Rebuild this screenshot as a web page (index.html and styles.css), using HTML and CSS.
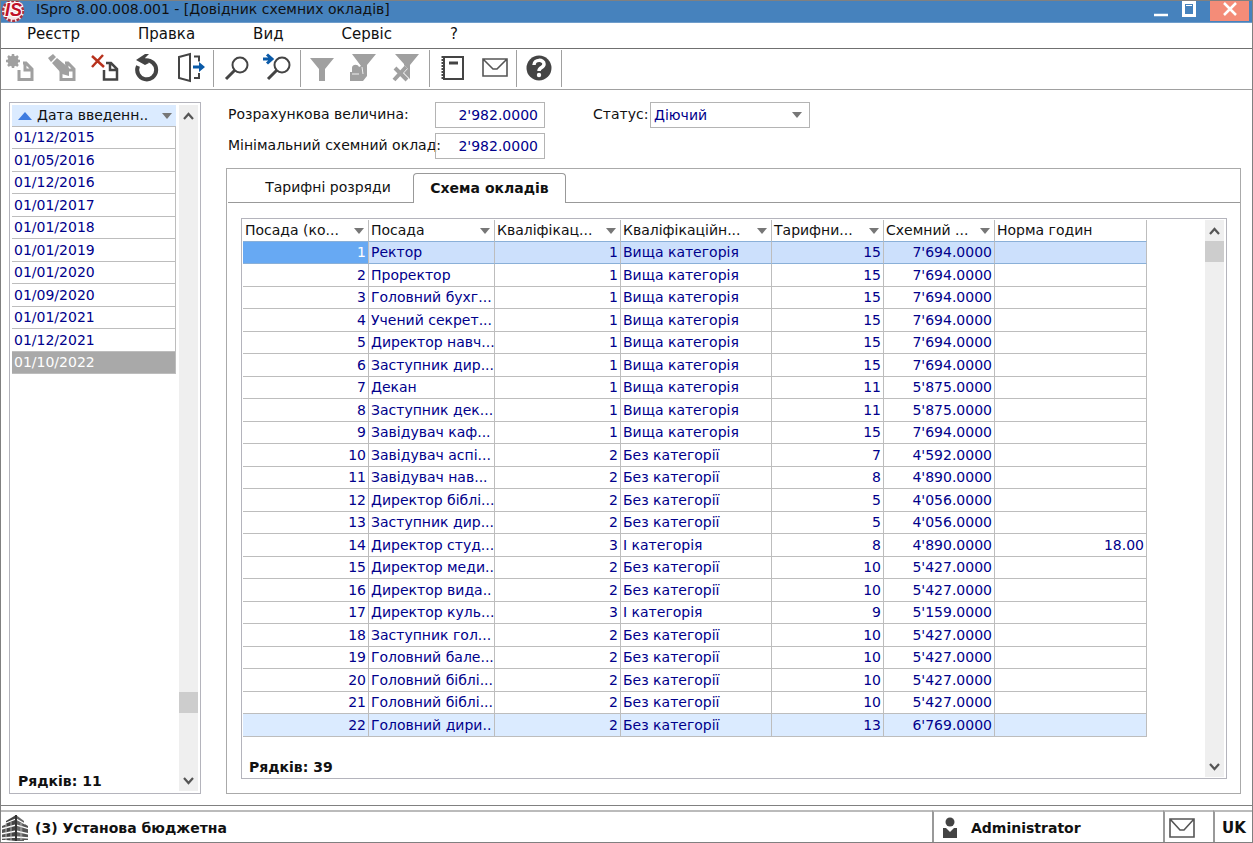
FILE: index.html
```html
<!DOCTYPE html>
<html lang="uk">
<head>
<meta charset="utf-8">
<title>ISpro 8.00.008.001 - [Довідник схемних окладів]</title>
<link rel="stylesheet" href="styles.css">
</head>
<body>
<div class="window">
  <header class="titlebar">
    <svg class="logo" width="30" height="22" viewBox="0 0 30 22" aria-hidden="true">
      <circle cx="12" cy="10" r="11" fill="#f4e4e6"/>
      <circle cx="12" cy="10" r="10" fill="none" stroke="#a8323f" stroke-width="2.500" stroke-dasharray="3 1.500"/>
      <text class="logo-text" x="4" y="15">IS</text>
    </svg>
    <h1 class="title">ISpro 8.00.008.001 - [Довідник схемних окладів]</h1>
    <div class="window-buttons">
      <button class="winbtn" aria-label="Згорнути"><svg width="14" height="16" viewBox="0 0 14 16"><path d="M0 14h14" stroke="#fff" stroke-width="2.500"/></svg></button>
      <button class="winbtn" aria-label="Розгорнути"><svg width="14" height="16" viewBox="0 0 14 16"><path d="M1.500 1.500h11v13h-11z" fill="none" stroke="#fff" stroke-width="3"/><path d="M4 4.500h6" stroke="#fff"/></svg></button>
      <button class="winbtn close" aria-label="Закрити"><svg width="14" height="14" viewBox="0 0 14 14"><path d="M1 1l12 12M13 1L1 13" stroke="#fff" stroke-width="2.500"/></svg></button>
    </div>
  </header>

  <nav class="menubar">
    <button>Реєстр</button><button>Правка</button><button>Вид</button><button>Сервіс</button><button>?</button>
  </nav>

  <div class="toolbar">
    <div class="tools">
      <button aria-label="Створити"><svg viewBox="0 0 32 32"><circle cx="6" cy="8" r="5.500" fill="#a0a0a0"/><path d="M6 1v14M-1 8h14M1 3l10 10M11 3L1 13" stroke="#a0a0a0" stroke-width="2.500"/><path d="M12 17v9.500h13V16l-6-6h-3M18 10v7h7" fill="none" stroke="#a0a0a0" stroke-width="3"/></svg></button>
      <button aria-label="Змінити"><svg viewBox="0 0 32 32"><path d="M12 18v8.500h13V16l-6-6h-3M18 10v7h7" fill="none" stroke="#a0a0a0" stroke-width="3"/><path d="M-1 5l5-4 3 3-5 5zM3 10l5-5 12 10v8l-7-2z" fill="#a0a0a0"/></svg></button>
      <button aria-label="Видалити"><svg viewBox="0 0 32 32"><path d="M1 3l12 11M12 2L1 14" stroke="#b8321d" stroke-width="2.500"/><path d="M13 17v9.500h13V16l-6-6h-5M19 10v7h7" fill="none" stroke="#444" stroke-width="2.500"/></svg></button>
      <button aria-label="Оновити"><svg viewBox="0 0 32 32"><path d="M5 13A9.500 9.500 0 1 0 12 7.500h4" fill="none" stroke="#444" stroke-width="4"/><path d="M3 7l9-6h4l-4 4 4 5-4 2z" fill="#444"/></svg></button>
      <button aria-label="Вийти"><svg viewBox="0 0 32 32"><path d="M4 4l11-3v27L4 25z" fill="none" stroke="#444" stroke-width="2"/><path d="M19 3.500h5v5M19 25h5v-5" fill="none" stroke="#444" stroke-width="2"/><path d="M18 12.500h6V9l6 5-6 5v-3.500h-6z" fill="#0a5aa8"/></svg></button>
    </div>
    <div class="tools">
      <button aria-label="Знайти"><svg viewBox="0 0 32 32"><circle cx="20" cy="12" r="7.500" fill="none" stroke="#444" stroke-width="2"/><path d="M15 17l-9 9" stroke="#444" stroke-width="3"/></svg></button>
      <button aria-label="Знайти далі"><svg viewBox="0 0 32 32"><circle cx="20" cy="12" r="7.500" fill="none" stroke="#444" stroke-width="2"/><path d="M15 17l-9 9" stroke="#444" stroke-width="3"/><path d="M1 6h8M5 1.500l5 4.500-5 4.500" fill="none" stroke="#0a5aa8" stroke-width="3"/></svg></button>
    </div>
    <div class="tools">
      <button aria-label="Фільтр"><svg viewBox="0 0 32 32"><path d="M3 5h24l-9 11v12h-6V16z" fill="#a0a0a0"/></svg></button>
      <button aria-label="Закріпити фільтр"><svg viewBox="0 0 32 32"><path d="M3 1h24l-9 11v11l-4 5H1v-9h2v-4c0-4 6-4 7-1l2-1z" fill="#a0a0a0"/><path d="M13 14l1 7M3 21h7" stroke="#eee" stroke-width="1"/></svg></button>
      <button aria-label="Зняти фільтр"><svg viewBox="0 0 32 32"><path d="M4 1h24l-9 11v14l-6-6v-9z" fill="#a0a0a0"/><path d="M4 15l12 12M15 14L3 27" stroke="#fff" stroke-width="5"/><path d="M4 15l12 12M15 14L3 27" stroke="#a0a0a0" stroke-width="4"/></svg></button>
    </div>
    <div class="tools">
      <button aria-label="Журнал"><svg viewBox="0 0 32 32"><path d="M8 4h19v22H8z" fill="none" stroke="#444" stroke-width="2"/><path d="M7 3v24" stroke="#444" stroke-width="3" stroke-dasharray="2 1"/><path d="M13 10h9" stroke="#444" stroke-width="3"/></svg></button>
      <button aria-label="Пошта"><svg viewBox="0 0 32 32"><path d="M5 6h24v17H5z M5 6l10 10h4L29 6" fill="none" stroke="#555" stroke-width="1.600"/></svg></button>
    </div>
    <div class="tools">
      <button aria-label="Довідка"><svg viewBox="0 0 32 32"><circle cx="16" cy="15" r="12.500" fill="#444"/><path d="M11 12c0-6 10-6 10-1 0 4-5 3-5 7" fill="none" stroke="#fff" stroke-width="3.500"/><circle cx="16" cy="22" r="2.200" fill="#fff"/></svg></button>
    </div>
  </div>

  <main class="workspace">
    <aside class="panel dates">
      <div class="panel-body">
        <table class="list">
          <thead><tr><th><span class="head"><svg width="14" height="9" viewBox="0 0 14 9"><path d="M0 9l7-8 7 8z" fill="#3d7be0"/></svg><span>Дата введенн..</span><i class="caret"></i></span></th></tr></thead>
          <tbody>
            <tr><td>01/12/2015</td></tr><tr><td>01/05/2016</td></tr><tr><td>01/12/2016</td></tr><tr><td>01/01/2017</td></tr><tr><td>01/01/2018</td></tr><tr><td>01/01/2019</td></tr><tr><td>01/01/2020</td></tr><tr><td>01/09/2020</td></tr><tr><td>01/01/2021</td></tr><tr><td>01/12/2021</td></tr><tr class="current"><td>01/10/2022</td></tr>
          </tbody>
        </table>
        <p class="count">Рядків: 11</p>
      </div>
      <div class="scrollbar at-end">
        <button aria-label="Вгору"><svg width="11" height="8" viewBox="0 0 11 8"><path d="M1 7l4.500-5L10 7" fill="none" stroke="#555" stroke-width="2.200"/></svg></button>
        <span class="thumb"></span>
        <button class="down" aria-label="Вниз"><svg width="11" height="8" viewBox="0 0 11 8"><path d="M1 1l4.500 5L10 1" fill="none" stroke="#555" stroke-width="2.200"/></svg></button>
      </div>
    </aside>

    <section class="details">
      <form class="fields">
        <label class="name" for="calc">Розрахункова величина:</label>
        <input id="calc" type="text" value="2'982.0000">
        <label class="status-label" for="status">Статус:</label>
        <span class="combo"><select id="status"><option>Діючий</option></select><i class="caret"></i></span>
        <label class="name" for="min">Мінімальний схемний оклад:</label>
        <input id="min" type="text" value="2'982.0000">
      </form>

      <div class="tabbox">
        <div class="tabs" role="tablist">
          <button role="tab" class="tab">Тарифні розряди</button>
          <button role="tab" class="tab active" aria-selected="true">Схема окладів</button>
        </div>
        <div class="panel scheme">
          <div class="panel-body">
            <table class="grid">
              <colgroup><col class="c-code"><col class="c-code"><col class="c-code"><col class="c-cat"><col class="c-rank"><col class="c-pay"><col class="c-norm"></colgroup>
              <thead><tr>
                <th><span class="head">Посада (ко...<i class="caret"></i></span></th>
                <th><span class="head">Посада<i class="caret"></i></span></th>
                <th><span class="head">Кваліфікац...<i class="caret"></i></span></th>
                <th><span class="head">Кваліфікаційн...<i class="caret"></i></span></th>
                <th><span class="head">Тарифни...<i class="caret"></i></span></th>
                <th><span class="head">Схемний ...<i class="caret"></i></span></th>
                <th><span class="head">Норма годин</span></th>
              </tr></thead>
              <tbody>
                <tr class="selected"><td>1</td><td>Ректор</td><td>1</td><td>Вища категорія</td><td>15</td><td>7'694.0000</td><td></td></tr>
                <tr><td>2</td><td>Проректор</td><td>1</td><td>Вища категорія</td><td>15</td><td>7'694.0000</td><td></td></tr>
                <tr><td>3</td><td>Головний бухг...</td><td>1</td><td>Вища категорія</td><td>15</td><td>7'694.0000</td><td></td></tr>
                <tr><td>4</td><td>Учений секрет...</td><td>1</td><td>Вища категорія</td><td>15</td><td>7'694.0000</td><td></td></tr>
                <tr><td>5</td><td>Директор навч...</td><td>1</td><td>Вища категорія</td><td>15</td><td>7'694.0000</td><td></td></tr>
                <tr><td>6</td><td>Заступник дир...</td><td>1</td><td>Вища категорія</td><td>15</td><td>7'694.0000</td><td></td></tr>
                <tr><td>7</td><td>Декан</td><td>1</td><td>Вища категорія</td><td>11</td><td>5'875.0000</td><td></td></tr>
                <tr><td>8</td><td>Заступник дек...</td><td>1</td><td>Вища категорія</td><td>11</td><td>5'875.0000</td><td></td></tr>
                <tr><td>9</td><td>Завідувач каф...</td><td>1</td><td>Вища категорія</td><td>15</td><td>7'694.0000</td><td></td></tr>
                <tr><td>10</td><td>Завідувач аспі...</td><td>2</td><td>Без категорії</td><td>7</td><td>4'592.0000</td><td></td></tr>
                <tr><td>11</td><td>Завідувач нав...</td><td>2</td><td>Без категорії</td><td>8</td><td>4'890.0000</td><td></td></tr>
                <tr><td>12</td><td>Директор біблі...</td><td>2</td><td>Без категорії</td><td>5</td><td>4'056.0000</td><td></td></tr>
                <tr><td>13</td><td>Заступник дир...</td><td>2</td><td>Без категорії</td><td>5</td><td>4'056.0000</td><td></td></tr>
                <tr><td>14</td><td>Директор студ...</td><td>3</td><td>І категорія</td><td>8</td><td>4'890.0000</td><td>18.00</td></tr>
                <tr><td>15</td><td>Директор меди..</td><td>2</td><td>Без категорії</td><td>10</td><td>5'427.0000</td><td></td></tr>
                <tr><td>16</td><td>Директор вида..</td><td>2</td><td>Без категорії</td><td>10</td><td>5'427.0000</td><td></td></tr>
                <tr><td>17</td><td>Директор куль...</td><td>3</td><td>І категорія</td><td>9</td><td>5'159.0000</td><td></td></tr>
                <tr><td>18</td><td>Заступник гол...</td><td>2</td><td>Без категорії</td><td>10</td><td>5'427.0000</td><td></td></tr>
                <tr><td>19</td><td>Головний бале...</td><td>2</td><td>Без категорії</td><td>10</td><td>5'427.0000</td><td></td></tr>
                <tr><td>20</td><td>Головний біблі...</td><td>2</td><td>Без категорії</td><td>10</td><td>5'427.0000</td><td></td></tr>
                <tr><td>21</td><td>Головний біблі...</td><td>2</td><td>Без категорії</td><td>10</td><td>5'427.0000</td><td></td></tr>
                <tr class="hover"><td>22</td><td>Головний дири..</td><td>2</td><td>Без категорії</td><td>13</td><td>6'769.0000</td><td></td></tr>
              </tbody>
            </table>
            <p class="count">Рядків: 39</p>
          </div>
          <div class="scrollbar">
            <button aria-label="Вгору"><svg width="11" height="8" viewBox="0 0 11 8"><path d="M1 7l4.500-5L10 7" fill="none" stroke="#555" stroke-width="2.200"/></svg></button>
            <span class="thumb"></span>
            <button class="down" aria-label="Вниз"><svg width="11" height="8" viewBox="0 0 11 8"><path d="M1 1l4.500 5L10 1" fill="none" stroke="#555" stroke-width="2.200"/></svg></button>
          </div>
        </div>
      </div>
    </section>
  </main>

  <footer class="statusbar">
    <div class="cell org">
      <svg width="28" height="28" viewBox="0 0 28 28" aria-hidden="true"><path d="M5 7l10-6v26l-10-1z" fill="#444"/><path d="M15 1l8 6v20h-8z" fill="#666"/><path d="M1 12l5-2v16H1zM22 9l5 3v14h-5z" fill="#555"/><path d="M0 15l15-4 13 4M0 20l15-3 13 3M1 24l14-1 13 1M5 9l10-4 9 5" stroke="#fff" stroke-width="1.300" fill="none"/><path d="M5 9v17M10 8v19M20 9v17" stroke="#ccc" stroke-width=".8"/><path d="M15 1v26" stroke="#333" stroke-width="2"/></svg>
      <span>(3) Установа бюджетна</span>
    </div>
    <div class="cell user">
      <svg width="16" height="22" viewBox="0 0 16 22" aria-hidden="true"><circle cx="8" cy="5" r="4.500" fill="#444"/><path d="M1 11h3l4 4 4-4h3v10H1z" fill="#444"/></svg>
      <span>Administrator</span>
    </div>
    <div class="cell mail"><svg width="26" height="20" viewBox="0 0 26 20" aria-hidden="true"><path d="M1 1h24v18H1zM1 1l10 11h4L25 1" fill="none" stroke="#555" stroke-width="1.600"/></svg></div>
    <div class="cell lang">UK</div>
  </footer>
</div>
</body>
</html>
```
FILE: styles.css
```css
* { box-sizing: border-box; }
body {
  margin: 0;
  font: 14px/20px "DejaVu Sans", Verdana, sans-serif;
  color: #111;
  background: #fff;
}
button, input, select { font: inherit; color: inherit; background: none; border: 0; padding: 0; margin: 0; border-radius: 0; }
svg { display: block; flex: none; }
.window { min-height: 100vh; display: flex; flex-direction: column; border: 1px solid #808080; }

.titlebar { display: flex; height: 22px; background: #4682bd; border-bottom: 1px solid #6f9dcb; overflow: hidden; }
.logo-text { font: italic 700 18px "Liberation Sans", Arial, sans-serif; fill: #c01028; stroke: #fff; stroke-width: 2px; paint-order: stroke; }
.title { margin: 0 0 0 5px; font-size: 14px; font-weight: 400; line-height: 17px; flex: 1; }
.window-buttons { display: flex; align-items: flex-start; gap: 14px; }
.winbtn { display: flex; justify-content: center; width: 14px; }
.winbtn.close { width: 39px; height: 20px; padding-top: 1px; margin-right: 3px; background: #f48c78; }

.menubar { display: flex; height: 26px; border-bottom: 1px solid #707070; font-size: 15px; }
.menubar button { padding: 0 29px 4px; }
.menubar button:first-child { padding-left: 26px; }

.toolbar { display: flex; height: 41px; padding-top: 1px; border-bottom: 1px solid #a0a0a0; }
.tools { display: flex; padding: 0 1px; margin-bottom: 2px; border-right: 1px solid #a0a0a0; }
.tools button { display: flex; align-items: center; justify-content: center; width: 42px; }
.tools svg { width: 32px; height: 32px; overflow: visible; }

.workspace { flex: 1; display: flex; gap: 25px; padding: 12px 11px 11px 8px; }
.panel { display: flex; border: 1px solid #b4b4bc; padding: 2px; }
.panel-body { flex: 1; min-width: 0; display: flex; flex-direction: column; }
.dates { width: 192px; }
.count { margin: auto 0 0; padding: 0 6px; font-weight: 700; }

table { border-collapse: separate; border-spacing: 0; color: #00008b; }
th { font-weight: 400; color: #111; text-align: left; }
td, th { padding: 0 2px; height: 22px; line-height: 21px; white-space: nowrap; border-bottom: 1px solid #bdbdbd; }
tbody tr:nth-child(even) td { height: 23px; }
.head { display: flex; align-items: center; }
.caret { flex: none; width: 0; height: 0; margin-left: auto; border: 5px solid transparent; border-top: 6px solid #777; border-bottom: 0; }
.list { width: 164px; }
.list th { background: #dbebff; }
.list .head { gap: 5px; padding: 0 2px 0 4px; }
.list tr td { border-right: 1px solid #bdbdbd; }
.list .current td { background: #a9a9a9; color: #fff; }

.scrollbar { width: 19px; display: flex; flex-direction: column; background: #efefef; }
.scrollbar button { height: 21px; display: flex; align-items: center; justify-content: center; }
.scrollbar .down { margin-top: auto; }
.thumb { height: 21px; background: #cdcdcd; }
.at-end .thumb { margin-top: auto; }
.at-end .down { margin: 57px 0 0; }

.details { flex: 1; min-width: 0; display: flex; flex-direction: column; }
.fields { display: grid; grid-template-columns: 207px 110px 48px 57px 160px; row-gap: 5px; padding-left: 2px; }
.fields .name { grid-column: 1; line-height: 24px; white-space: nowrap; }
.fields input { grid-column: 2; width: 110px; height: 26px; border: 1px solid #b4b4b4; padding: 0 6px; text-align: right; color: #00008b; }
.status-label { grid-column: 4; line-height: 24px; }
.combo { grid-column: 5; display: grid; align-items: center; border: 1px solid #b4b4b4; }
.combo select { grid-area: 1 / 1; appearance: none; height: 24px; padding: 0 3px; color: #00008b; }
.combo .caret { grid-area: 1 / 1; margin-right: 7px; pointer-events: none; }

.tabbox { flex: 1; display: flex; flex-direction: column; margin-top: 9px; border: 1px solid #aaa; }
.tabs { display: flex; height: 34px; padding: 4px 0 0; margin-left: 1px; box-shadow: inset 0 -1px #999; }
.tab { width: 150px; margin-left: 25px; padding-bottom: 2px; }
.tab.active { width: 153px; margin-left: 10px; border: 1px solid #999; border-bottom: 0; border-radius: 4px 4px 0 0; background: #fff; font-weight: 700; }
.scheme { flex: 1; margin: 15px 13px 14px 14px; padding: 1px 2px 1px 1px; }

.grid { table-layout: fixed; width: 904px; }
.c-code { width: 126px; }
.c-cat { width: 151px; }
.c-rank { width: 112px; }
.c-pay { width: 111px; }
.c-norm { width: 152px; }
.grid th, .grid td { border-right: 1px solid #bdbdbd; overflow: hidden; }
.grid .head .caret { margin-right: 2px; }
.grid td { text-align: right; }
.grid td:nth-child(2), .grid td:nth-child(4) { text-align: left; padding-right: 0; }
.grid th { border-bottom-color: #8ab0d8; }
.grid .selected td { background: #cce0fc; border-bottom-color: #8ab0d8; }
.grid .selected td:first-child { background: #67a9f3; color: #fff; }
.grid .hover td { background: #dbebff; }

.statusbar { display: flex; height: 37px; border-top: 1px solid #808080; padding-top: 4px; font-weight: 700; }
.cell { display: flex; align-items: center; gap: 6px; padding-top: 2px; border-top: 2px solid #bbb; }
.cell + .cell { border-left: 2px solid #999; }
.org { flex: 1; }
.user { width: 231px; padding-left: 8px; gap: 13px; }
.mail { width: 50px; padding-left: 4px; }
.lang { width: 39px; padding-left: 7px; font-size: 15px; }
```
